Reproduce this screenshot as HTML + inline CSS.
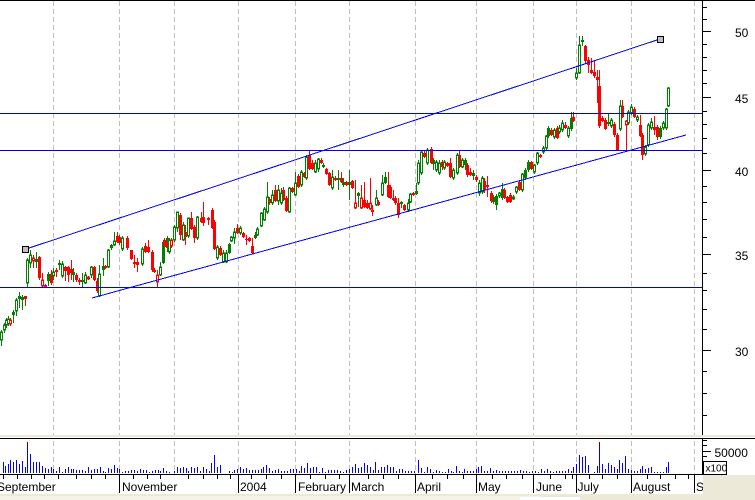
<!DOCTYPE html>
<html><head><meta charset="utf-8"><style>
html,body{margin:0;padding:0;background:#fff;width:755px;height:500px;overflow:hidden}
svg{display:block}
text{font-family:"Liberation Sans",Arial,sans-serif;font-size:12px;fill:#000}
</style></head><body>
<svg width="755" height="500" viewBox="0 0 755 500" xmlns="http://www.w3.org/2000/svg">
<rect width="755" height="500" fill="#fff"/>
<g shape-rendering="crispEdges">
<!-- grid -->
<path fill="none" stroke="#c0c0c0" stroke-dasharray="5 3" d="M53.5 1V474M119.5 1V474M174.5 1V474M238.5 1V474M295.5 1V474M349.5 1V474M415.5 1V474M476.5 1V474M533.5 1V474M576.5 1V474M631.5 1V474M694.5 1V474"/>
<!-- wicks -->
<path fill="none" stroke="#008000" d="M1.5 330V346M4.5 323V333M6.5 318V328M8.5 316V326M13.5 310V323M16.5 298V316M19.5 292V308M22.5 295V310M27.5 258V287M30.5 250V268M36.5 252V268M48.5 272V286M53.5 268V280M59.5 260V270M62.5 261V278M73.5 268V282M82.5 273V288M85.5 272V284M91.5 266V278M99.5 265V297M103.5 258V276M108.5 249V268M111.5 244V250M114.5 232V246M122.5 236V251M142.5 247V266M160.5 262V276M163.5 241V264M167.5 236V252M169.5 238V254M174.5 225V242M177.5 212V232M183.5 222V241M188.5 218V238M197.5 216V240M217.5 245V260M223.5 250V263M226.5 250V263M229.5 243V254M231.5 236V242M234.5 228V244M240.5 226V235M255.5 232V239M257.5 227V236M261.5 212V227M264.5 207V221M267.5 182V214M272.5 190V205M278.5 185V205M281.5 188V205M289.5 187V213M295.5 172V196M301.5 170V187M306.5 155V180M315.5 160V173M318.5 158V172M323.5 163V168M332.5 170V190M338.5 170V190M343.5 178V187M349.5 170V200M358.5 192V207M376.5 190V206M382.5 175V196M385.5 172V184M401.5 201V208M408.5 199V212M410.5 193V203M416.5 183V195M418.5 160V185M421.5 150V175M427.5 148V165M433.5 158V170M436.5 160V172M439.5 160V175M444.5 160V170M453.5 168V180M457.5 153V175M462.5 158V168M465.5 158V170M473.5 170V180M479.5 180V196M482.5 176V194M493.5 195V204M496.5 194V210M499.5 192V198M502.5 183V200M513.5 195V200M516.5 186V194M522.5 173V192M525.5 168V180M528.5 160V172M534.5 164V174M537.5 152V165M543.5 146V154M546.5 135V150M548.5 126V138M554.5 128V139M559.5 125V134M562.5 120V132M568.5 126V138M571.5 112V131M576.5 68V80M579.5 36V74M582.5 36V46M608.5 113V126M611.5 118V128M620.5 100V131M628.5 110V125M631.5 104V115M637.5 115V122M645.5 145V156M648.5 123V147M651.5 118V130M660.5 126V139M663.5 121V130M666.5 108V130M668.5 87V107"/>
<path fill="none" stroke="#f00" d="M10.5 318V326M25.5 296V306M33.5 255V268M39.5 256V280M42.5 273V287M45.5 284V288M51.5 270V285M56.5 268V277M65.5 266V281M68.5 266V282M71.5 260V280M76.5 273V282M79.5 278V285M88.5 276V280M94.5 266V281M97.5 278V293M105.5 265V269M117.5 232V243M119.5 235V245M127.5 236V250M131.5 250V260M134.5 255V268M137.5 258V272M145.5 243V253M148.5 240V253M152.5 250V272M154.5 268V273M157.5 270V287M164.5 238V250M166.5 240V248M171.5 238V248M180.5 213V240M185.5 225V245M191.5 212V230M194.5 225V243M201.5 212V223M203.5 202V226M208.5 217V225M212.5 208V229M214.5 220V250M220.5 246V256M237.5 224V234M243.5 232V238M246.5 235V245M249.5 237V242M252.5 238V254M269.5 197V205M275.5 185V202M283.5 187V201M286.5 196V212M292.5 187V193M298.5 174V188M304.5 172V178M309.5 150V170M312.5 160V170M321.5 158V164M326.5 168V175M329.5 172V186M335.5 176V181M341.5 172V183M346.5 181V186M352.5 180V189M355.5 180V209M361.5 185V209M364.5 182V208M367.5 200V209M370.5 178V210M372.5 205V216M378.5 200V206M388.5 172V198M390.5 185V199M393.5 190V201M395.5 196V205M398.5 198V218M404.5 204V211M413.5 192V196M424.5 150V158M431.5 147V164M442.5 160V170M447.5 162V167M450.5 158V178M459.5 150V168M467.5 163V177M470.5 168V176M476.5 175V182M484.5 178V193M487.5 176V197M491.5 191V203M504.5 188V199M507.5 196V203M510.5 193V203M519.5 181V191M531.5 161V170M540.5 154V158M551.5 128V136M557.5 126V139M565.5 122V129M573.5 112V122M585.5 45V63M588.5 57V73M591.5 58V74M594.5 60V78M597.5 70V103M599.5 70V128M602.5 116V122M605.5 118V130M614.5 122V137M617.5 133V151M622.5 100V118M626.5 120V150M634.5 107V118M640.5 115V137M642.5 133V160M654.5 116V135M657.5 125V140"/>
<!-- filled bodies -->
<path fill="none" stroke="#008000" stroke-width="3" d="M13.5 312V315M19.5 296V299M22.5 297V300M36.5 259V262M48.5 274V281M59.5 263V265M73.5 272V275M82.5 280V282M103.5 266V270M111.5 245V248M163.5 242V263M167.5 238V245M229.5 244V253M255.5 235V238M323.5 165V167M338.5 178V180M343.5 182V185M349.5 182V185M358.5 193V196M385.5 177V183M401.5 202V204M416.5 191V194M433.5 160V164M465.5 160V165M473.5 173V176M493.5 197V202M496.5 196V205M502.5 189V198M525.5 170V178M528.5 162V170M548.5 128V136M571.5 118V129M582.5 40V42M608.5 122V124M660.5 128V137"/>
<path fill="none" stroke="#f00" stroke-width="3" d="M25.5 296V299M39.5 257V278M45.5 285V287M51.5 274V283M56.5 270V272M65.5 267V271M68.5 267V275M71.5 269V273M76.5 275V280M79.5 280V282M94.5 267V280M97.5 281V291M105.5 266V268M117.5 236V242M119.5 237V243M127.5 238V248M131.5 250V259M134.5 262V264M137.5 262V265M145.5 246V252M148.5 247V252M152.5 252V270M154.5 270V272M164.5 240V246M166.5 242V247M180.5 215V235M185.5 232V237M191.5 218V229M194.5 227V238M201.5 218V222M203.5 217V223M208.5 218V220M212.5 210V228M214.5 222V249M220.5 248V255M237.5 228V233M243.5 233V237M246.5 239V240M249.5 238V241M252.5 246V253M269.5 199V203M275.5 190V201M283.5 190V200M286.5 198V211M292.5 188V192M298.5 176V187M304.5 173V177M309.5 155V169M312.5 163V169M321.5 160V163M326.5 169V174M329.5 173V185M335.5 178V180M341.5 178V182M346.5 182V185M352.5 181V188M364.5 200V207M367.5 203V208M372.5 210V212M378.5 202V205M388.5 185V197M390.5 187V198M393.5 198V200M395.5 198V203M398.5 203V215M404.5 205V210M413.5 193V195M424.5 153V157M431.5 149V163M442.5 162V167M447.5 163V166M450.5 163V177M459.5 155V167M467.5 165V175M470.5 172V175M476.5 177V180M484.5 181V190M487.5 185V187M491.5 193V201M504.5 190V198M507.5 197V202M510.5 195V202M519.5 182V190M531.5 162V169M540.5 155V157M551.5 130V135M557.5 128V138M565.5 125V128M573.5 117V121M585.5 46V61M588.5 60V65M591.5 70V73M594.5 72V76M597.5 77V80M599.5 86V126M602.5 118V121M605.5 120V129M614.5 124V135M617.5 135V150M622.5 106V117M634.5 109V117M640.5 125V136M642.5 135V155M654.5 127V130M657.5 127V137"/>
<!-- hollow bodies -->
<path fill="none" stroke="#008000" stroke-width="3" stroke-linecap="square" d="M1.5 333V339M4.5 326V329M6.5 321V324M8.5 320V323M16.5 301V310M27.5 261V282M30.5 256V262M53.5 273V275M62.5 265V275M85.5 276V282M91.5 268V274M99.5 275V295M108.5 251V266M114.5 242V244M122.5 239V248M142.5 250V263M160.5 268V274M169.5 241V251M174.5 228V239M177.5 213V227M183.5 226V239M188.5 219V235M197.5 218V237M217.5 248V257M223.5 254V261M226.5 254V261M231.5 238V240M234.5 233V237M240.5 229V232M257.5 230V234M261.5 214V225M264.5 210V219M267.5 198V211M272.5 196V202M278.5 191V200M281.5 194V202M289.5 189V211M295.5 184V194M301.5 173V184M306.5 158V177M315.5 164V171M318.5 160V168M332.5 178V187M376.5 199V204M382.5 184V194M408.5 204V209M410.5 195V201M418.5 164V182M421.5 153V172M427.5 151V162M436.5 163V169M439.5 164V172M444.5 163V167M453.5 171V177M457.5 156V172M462.5 161V166M479.5 184V192M482.5 179V191M499.5 194V195M513.5 198V198M516.5 188V191M522.5 175V189M534.5 166V171M537.5 154V162M543.5 149V151M546.5 137V147M554.5 131V136M559.5 129V131M562.5 124V129M568.5 129V135M576.5 74V77M579.5 46V72M611.5 121V125M620.5 107V128M628.5 113V122M631.5 108V112M637.5 118V119M645.5 148V153M648.5 126V144M651.5 123V127M663.5 124V127M666.5 110V127M668.5 89V105"/>
<path fill="none" stroke="#f00" stroke-width="3" stroke-linecap="square" d="M10.5 321V323M33.5 259V260M42.5 281V285M88.5 278V278M157.5 276V281M171.5 241V245M355.5 204V207M361.5 199V207M370.5 204V208M626.5 122V124"/>
<path fill="none" stroke="#fff" d="M1.5 333V339M4.5 326V329M6.5 321V324M8.5 320V323M16.5 301V310M27.5 261V282M30.5 256V262M53.5 273V275M62.5 265V275M85.5 276V282M91.5 268V274M99.5 275V295M108.5 251V266M114.5 242V244M122.5 239V248M142.5 250V263M160.5 268V274M169.5 241V251M174.5 228V239M177.5 213V227M183.5 226V239M188.5 219V235M197.5 218V237M217.5 248V257M223.5 254V261M226.5 254V261M231.5 238V240M234.5 233V237M240.5 229V232M257.5 230V234M261.5 214V225M264.5 210V219M267.5 198V211M272.5 196V202M278.5 191V200M281.5 194V202M289.5 189V211M295.5 184V194M301.5 173V184M306.5 158V177M315.5 164V171M318.5 160V168M332.5 178V187M376.5 199V204M382.5 184V194M408.5 204V209M410.5 195V201M418.5 164V182M421.5 153V172M427.5 151V162M436.5 163V169M439.5 164V172M444.5 163V167M453.5 171V177M457.5 156V172M462.5 161V166M479.5 184V192M482.5 179V191M499.5 194V195M513.5 198V198M516.5 188V191M522.5 175V189M534.5 166V171M537.5 154V162M543.5 149V151M546.5 137V147M554.5 131V136M559.5 129V131M562.5 124V129M568.5 129V135M576.5 74V77M579.5 46V72M611.5 121V125M620.5 107V128M628.5 113V122M631.5 108V112M637.5 118V119M645.5 148V153M648.5 126V144M651.5 123V127M663.5 124V127M666.5 110V127M668.5 89V105M10.5 321V323M33.5 259V260M42.5 281V285M157.5 276V281M171.5 241V245M355.5 204V207M361.5 199V207M370.5 204V208M626.5 122V124"/>
<!-- horizontal & channel lines -->
<path fill="none" stroke="#0000f0" d="M0 113.5H702M0 150.5H702M0 287.5H702"/>
<path fill="none" stroke="#00f" d="M29 248L660 39M92 298L686 135"/>
<rect x="22.5" y="246.5" width="6" height="6" fill="#c0c0c0" stroke="#000"/>
<rect x="657.5" y="36.5" width="6" height="6" fill="#c0c0c0" stroke="#000"/>
<!-- volume -->
<path fill="none" stroke="#00f" d="M3.5 462V473M5.5 466V473M8.5 464V473M10.5 460V473M13.5 462V473M16.5 460V473M19.5 464V473M22.5 461V473M25.5 467V473M27.5 442V473M30.5 454V473M33.5 462V473M36.5 462V473M39.5 462V473M42.5 466V473M45.5 468V473M48.5 469V473M51.5 467V473M53.5 469V473M56.5 471V473M59.5 467V473M62.5 472V473M65.5 469V473M68.5 467V473M71.5 469V473M73.5 469V473M76.5 470V473M79.5 470V473M82.5 470V473M85.5 471V473M88.5 467V473M91.5 470V473M94.5 469V473M97.5 469V473M100.5 467V473M103.5 471V473M105.5 472V473M108.5 468V473M111.5 469V473M114.5 465V473M117.5 468V473M119.5 469V473M122.5 472V473M125.5 471V473M128.5 471V473M131.5 470V473M134.5 470V473M137.5 471V473M140.5 469V473M143.5 470V473M146.5 470V473M149.5 472V473M152.5 471V473M155.5 470V473M158.5 470V473M160.5 471V473M163.5 468V473M166.5 471V473M169.5 472V473M174.5 471V473M177.5 467V473M180.5 468V473M183.5 467V473M186.5 468V473M188.5 471V473M191.5 467V473M194.5 468V473M197.5 467V473M200.5 471V473M203.5 467V473M206.5 469V473M209.5 471V473M211.5 463V473M214.5 455V473M217.5 467V473M220.5 465V473M229.5 471V473M232.5 472V473M234.5 470V473M237.5 469V473M240.5 467V473M243.5 469V473M246.5 468V473M249.5 470V473M252.5 470V473M255.5 470V473M258.5 470V473M261.5 469V473M263.5 467V473M266.5 465V473M269.5 468V473M272.5 471V473M275.5 470V473M278.5 469V473M281.5 471V473M284.5 471V473M287.5 471V473M290.5 469V473M293.5 469V473M296.5 469V473M299.5 471V473M301.5 466V473M304.5 468V473M307.5 463V473M310.5 468V473M313.5 467V473M316.5 467V473M319.5 472V473M322.5 468V473M325.5 472V473M328.5 470V473M331.5 470V473M334.5 470V473M337.5 470V473M340.5 471V473M343.5 472V473M346.5 470V473M349.5 469V473M352.5 467V473M355.5 464V473M358.5 468V473M361.5 467V473M364.5 463V473M367.5 465V473M370.5 467V473M373.5 470V473M375.5 462V473M378.5 470V473M381.5 467V473M384.5 467V473M387.5 465V473M390.5 467V473M393.5 467V473M396.5 471V473M399.5 469V473M402.5 469V473M405.5 471V473M408.5 471V473M411.5 471V473M414.5 471V473M418.5 460V473M421.5 468V473M424.5 472V473M427.5 467V473M430.5 469V473M433.5 472V473M436.5 470V473M439.5 471V473M442.5 472V473M445.5 472V473M448.5 469V473M451.5 471V473M453.5 472V473M456.5 466V473M459.5 471V473M462.5 472V473M464.5 469V473M467.5 471V473M470.5 471V473M473.5 471V473M476.5 469V473M478.5 467V473M481.5 466V473M484.5 471V473M487.5 471V473M490.5 468V473M493.5 471V473M496.5 470V473M499.5 471V473M502.5 471V473M505.5 471V473M508.5 471V473M511.5 471V473M514.5 471V473M517.5 471V473M520.5 470V473M523.5 471V473M526.5 471V473M529.5 472V473M532.5 471V473M535.5 471V473M538.5 472V473M541.5 469V473M544.5 471V473M547.5 469V473M550.5 471V473M553.5 472V473M556.5 471V473M559.5 471V473M562.5 471V473M565.5 471V473M568.5 469V473M571.5 471V473M573.5 467V473M576.5 464V473M579.5 455V473M582.5 457V473M585.5 456V473M588.5 465V473M594.5 472V473M597.5 466V473M599.5 442V473M602.5 464V473M605.5 469V473M608.5 463V473M611.5 465V473M614.5 467V473M617.5 469V473M619.5 460V473M622.5 463V473M625.5 456V473M628.5 469V473M631.5 470V473M634.5 471V473M637.5 471V473M640.5 469V473M642.5 466V473M645.5 469V473M648.5 468V473M651.5 467V473M654.5 472V473M657.5 472V473M660.5 472V473M663.5 472V473M666.5 467V473M668.5 462V473"/>
<!-- separators -->
<rect x="0" y="435" width="755" height="2" fill="#ece9d8"/>
<rect x="0" y="437" width="755" height="1" fill="#fff"/>
<rect x="0" y="438" width="755" height="1" fill="#000"/>
<rect x="0" y="0" width="755" height="1" fill="#000"/>
</g>
<!-- month labels -->
<text x="-3" y="491">September</text>
<text x="122" y="491">November</text>
<text x="240" y="491">2004</text>
<text x="298" y="491">February</text>
<text x="351" y="491">March</text>
<text x="417" y="491">April</text>
<text x="478" y="491">May</text>
<text x="536" y="491">June</text>
<text x="577.5" y="491">July</text>
<text x="633" y="491">August</text>
<text x="696" y="491">S</text>
<g shape-rendering="crispEdges">
<!-- bottom frame -->
<rect x="703" y="475" width="52" height="25" fill="#ece9d8"/>
<rect x="0" y="494" width="703" height="6" fill="#ece9d8"/>
<rect x="0" y="496" width="540" height="4" fill="#f5f3e8"/>
<rect x="520" y="497" width="60" height="3" fill="#fff"/>
<!-- axes -->
<path fill="none" stroke="#000" d="M702.5 0V435M702.5 438V474M0 474.5H703M702 7.5H707M702 19.5H707M702 31.5H711M702 44.5H707M702 57.5H707M702 70.5H707M702 83.5H707M702 97.5H711M702 111.5H707M702 124.5H707M702 138.5H707M702 153.5H707M702 170.5H711M702 186.5H707M702 202.5H707M702 219.5H707M702 237.5H707M702 254.5H711M702 273.5H707M702 290.5H707M702 309.5H707M702 329.5H707M702 350.5H711M702 371.5H707M702 393.5H707M702 415.5H707M702 440.5H707M702 445.5H707M702 451.5H711M702 456.5H707"/>
<path fill="none" stroke="#000" d="M3.5 474V479M17.5 474V479M31.5 474V479M44.5 474V479M58.5 474V479M76.5 474V479M91.5 474V479M105.5 474V479M133.5 474V479M147.5 474V479M160.5 474V479M188.5 474V479M203.5 474V479M217.5 474V479M230.5 474V479M251.5 474V479M266.5 474V479M281.5 474V479M310.5 474V479M325.5 474V479M339.5 474V479M368.5 474V479M383.5 474V479M398.5 474V479M432.5 474V479M447.5 474V479M463.5 474V479M492.5 474V479M506.5 474V479M522.5 474V479M550.5 474V479M565.5 474V479M572.5 474V479M589.5 474V479M602.5 474V479M617.5 474V479M647.5 474V479M660.5 474V479M675.5 474V479M688.5 474V479"/>
<path fill="none" stroke="#000" d="M119.5 474V493M238.5 474V493M295.5 474V493M349.5 474V493M415.5 474V493M476.5 474V493M533.5 474V493M576.5 474V493M631.5 474V493M694.5 474V493"/>
<rect x="703.5" y="461.5" width="23" height="13" fill="#fff" stroke="#000"/>
</g>
<!-- y labels -->
<text x="735" y="37">50</text>
<text x="735" y="103">45</text>
<text x="735" y="176">40</text>
<text x="735" y="260">35</text>
<text x="735" y="356">30</text>
<text x="714.5" y="457">50000</text>
<text x="705.5" y="471.5" style="font-size:10px">x100</text>
</svg>
</body></html>
